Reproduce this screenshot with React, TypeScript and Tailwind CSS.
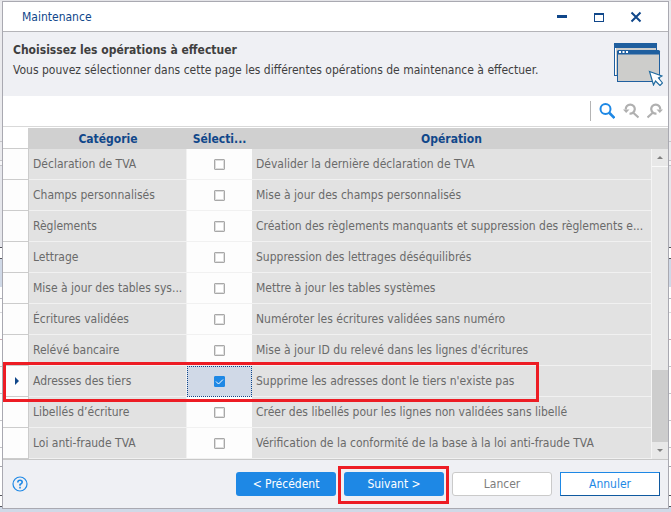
import { useState } from "react";
import clsx from "clsx";

type TOperation = {
  category: string;
  label: string;
};

const operations: TOperation[] = [
  { category: "Déclaration de TVA", label: "Dévalider la dernière déclaration de TVA" },
  { category: "Champs personnalisés", label: "Mise à jour des champs personnalisés" },
  {
    category: "Règlements",
    label: "Création des règlements manquants et suppression des règlements e...",
  },
  { category: "Lettrage", label: "Suppression des lettrages déséquilibrés" },
  { category: "Mise à jour des tables sys...", label: "Mettre à jour les tables systèmes" },
  { category: "Écritures validées", label: "Numéroter les écritures validées sans numéro" },
  { category: "Relévé bancaire", label: "Mise à jour ID du relevé dans les lignes d'écritures" },
  { category: "Adresses des tiers", label: "Supprime les adresses dont le tiers n'existe pas" },
  {
    category: "Libellés d’écriture",
    label: "Créer des libellés pour les lignes non validées sans libellé",
  },
  {
    category: "Loi anti-fraude TVA",
    label: "Vérification de la conformité de la base à la loi anti-fraude TVA",
  },
];

const CURRENT_ROW = 7;

// edge of the application window that shows on both sides of the dialog
const backdrop = [
  "h-[140px] bg-[#ebebee]",
  "h-px bg-[#c4c4c8]",
  "h-[18px] bg-[#ebebee]",
  "h-px bg-[#c4c4c8]",
  "h-[4px] bg-[#f6f6f8]",
  "h-px bg-[#c4c4c8]",
  "h-[81px] bg-[#e6e7ec]",
  "h-px bg-[#55555c]",
  "h-[10px] bg-white",
  "h-px bg-[#55555c]",
  "h-[28px] bg-[#d0d9e7]",
  "h-[11px] bg-white",
  "h-px bg-[#b4b4bc]",
  "h-[13px] bg-white",
  "h-px bg-[#d8d8dc]",
  "h-[26px] bg-white",
  "h-px bg-[#c8a8b0]",
  "h-[26px] bg-white",
  "h-px bg-[#c4c4c8]",
  "h-[26px] bg-white",
  "h-px bg-[#c4c4c8]",
  "h-[26px] bg-white",
  "h-px bg-[#c4c4c8]",
  "h-[26px] bg-white",
  "h-px bg-[#c4c4c8]",
  "h-[18px] bg-white",
  "h-px bg-[#a4a4ac]",
  "h-[28px] bg-white",
  "h-px bg-[#55555c]",
  "h-[10px] bg-white",
  "h-px bg-[#55555c]",
];

function Backdrop() {
  return (
    <div className="w-[2px] shrink-0" aria-hidden="true">
      {backdrop.map((segment, index) => (
        <div key={index} className={segment} />
      ))}
    </div>
  );
}

function TitleBar() {
  return (
    <div className="flex h-[30px] items-center border-b border-[#b4b4b8] bg-white pl-[19px] pr-6 text-[#10478a]">
      <h1 className="flex-1">Maintenance</h1>
      <div className="flex gap-[21px]">
        <button type="button" aria-label="Réduire" className="h-4 w-4">
          <svg viewBox="0 0 16 16" className="h-4 w-4" shapeRendering="crispEdges">
            <path d="M3 6h10v3H3z" fill="#10478a" />
          </svg>
        </button>
        <button type="button" aria-label="Agrandir" className="h-4 w-4">
          <svg viewBox="0 0 16 16" className="h-4 w-4" shapeRendering="crispEdges">
            <path d="M3 4h10v9H3zM4 6v6h8V6z" fill="#10478a" fillRule="evenodd" />
          </svg>
        </button>
        <button type="button" aria-label="Fermer" className="h-4 w-4">
          <svg viewBox="0 0 16 16" className="h-4 w-4">
            <path d="M3.500 3.500l9 9M12.500 3.500l-9 9" stroke="#10478a" strokeWidth="2" />
          </svg>
        </button>
      </div>
    </div>
  );
}

function WindowsIcon() {
  return (
    <svg viewBox="0 0 50 44" className="h-[44px] w-[50px]">
      <rect x="1.5" y="1.5" width="42" height="32" fill="#cdcdcb" stroke="#1f5f9f" />
      <path d="M2 6h1v27H2z" fill="#fff" />
      <path d="M1 6V2.500Q1 1 2.500 1H42.500Q44 1 44 2.500V6z" fill="#1f5f9f" />
      <rect x="4.500" y="9.500" width="42" height="30" fill="#cdcdcb" stroke="#1f5f9f" />
      <path d="M4 12V9.500Q4 8 5.500 8H45.500Q47 8 47 9.500V12.500H4z" fill="#1f5f9f" />
      <path d="M6 9h2v2H6zM9.500 9h2v2h-2zM13 9h2v2h-2z" fill="#fff" />
      <path
        d="M36.500 29.500l12.500 4.500-3.500 2 4 5-2.500 2.500-4.500-4.500-2 4z"
        fill="#fff"
        stroke="#1f6a9f"
        strokeWidth="1.200"
      />
    </svg>
  );
}

function Toolbar() {
  return (
    <div className="flex h-[30px] items-center justify-end gap-2 bg-white pr-[5px]">
      <span className="h-5 w-px bg-[#b4b4b4]" />
      <button type="button" aria-label="Rechercher" className="h-4 w-4">
        <svg viewBox="0 0 16 16" className="h-4 w-4" fill="none" stroke="#1e88e5">
          <circle cx="6.500" cy="6" r="5" strokeWidth="2" />
          <path d="M10 9.500l5.500 5.500" strokeWidth="2.600" />
        </svg>
      </button>
      <button type="button" aria-label="Rechercher le précédent" className="h-4 w-4">
        <svg viewBox="0 0 16 16" className="h-4 w-4" fill="none" stroke="#b0b0b0" strokeWidth="2.200">
          <path d="M2.800 6.500A4.500 4.500 0 1 1 6.500 10.500M10 9.500l5.500 5" />
          <path d="M0 6.500h6.500L3.200 10z" fill="#b0b0b0" stroke="none" />
        </svg>
      </button>
      <button type="button" aria-label="Rechercher le suivant" className="h-4 w-4">
        <svg viewBox="0 0 16 16" className="h-4 w-4" fill="none" stroke="#b0b0b0" strokeWidth="2.200">
          <path d="M13.200 6.500A4.500 4.500 0 1 0 9.500 10.500M6 9.500L0.500 14.500" />
          <path d="M16 6.500H9.500l3.300 3.500z" fill="#b0b0b0" stroke="none" />
        </svg>
      </button>
    </div>
  );
}

function ScrollBar() {
  return (
    <div className="flex w-[17px] shrink-0 flex-col bg-[#e8e8e8]">
      <div className="h-[21px] bg-[#d0d0d0]" />
      <div className="flex flex-1 flex-col border-l border-[#f4f4f4]">
        <div className="flex h-[18px] items-center justify-center border-b border-[#f9f9f9]">
          <svg viewBox="0 0 6 3" className="h-[3px] w-[6px]">
            <path d="M0 3L3 0l3 3z" fill="#808080" />
          </svg>
        </div>
        <div className="flex-1" />
        <div className="h-[72px] bg-[#cdcdcd]" />
        <div className="flex h-[17px] items-center justify-center">
          <svg viewBox="0 0 6 3" className="h-[3px] w-[6px]">
            <path d="M0 0L3 3l3-3z" fill="#808080" />
          </svg>
        </div>
      </div>
    </div>
  );
}

export default function App() {
  const [selected, setSelected] = useState<number[]>([CURRENT_ROW]);

  const toggle = (index: number) =>
    setSelected((prev) =>
      prev.includes(index) ? prev.filter((i) => i !== index) : [...prev, index]
    );

  return (
    <div className="flex min-h-screen items-start border-t border-[#e4e4e8] bg-[#d0d9e7] font-['DejaVu_Sans_Condensed','Noto_Sans',sans-serif] text-[12px] leading-4">
      <Backdrop />
      <main className="min-w-0 flex-1 border border-[#a9a9b1] bg-[#eff0f4]">
        <TitleBar />

        <header className="flex h-[64px] items-start justify-between pl-[10px] pr-[5px] pt-[10px] text-[#3f3f3f]">
          <div className="flex flex-col gap-1">
            <h2 className="font-bold">Choisissez les opérations à effectuer</h2>
            <p>
              Vous pouvez sélectionner dans cette page les différentes opérations de
              maintenance à effectuer.
            </p>
          </div>
          <WindowsIcon />
        </header>

        <Toolbar />

        <div className="relative flex border-b border-t border-b-[#c8c8c8] border-t-[#d9d9d9] bg-white pt-px">
          <table className="w-full min-w-0 table-fixed border-separate border-spacing-0 text-[#6a6a6a]">
            <colgroup>
              <col className="w-[26px]" />
              <col className="w-[158px]" />
              <col className="w-[65px]" />
              <col />
            </colgroup>
            <thead>
              <tr className="h-[21px] bg-[#d0d0d0] text-[#10478a]">
                <th
                  className="border-b border-r border-b-[#cccccc] border-r-[#d0d0d0] bg-white p-0"
                  aria-label="Ligne"
                />
                <th className="p-0">Catégorie</th>
                <th className="p-0">Sélecti...</th>
                <th className="p-0">Opération</th>
              </tr>
            </thead>
            <tbody>
              {operations.map((operation, index) => {
                const current = index === CURRENT_ROW;
                return (
                  <tr key={operation.category} className="h-[31px]">
                    <td className="border-b border-r border-[#cccccc] bg-[#fdfdfd] p-0">
                      {current && (
                        <svg viewBox="0 0 4 8" className="ml-3 h-2 w-1">
                          <path d="M0 0l4 4-4 4z" fill="#10478a" />
                        </svg>
                      )}
                    </td>
                    <td className="whitespace-nowrap border-b border-r border-[#f1f1f1] bg-[#e2e2e2] py-0 pl-1 pr-0">
                      {operation.category}
                    </td>
                    <td
                      className={clsx(
                        "border-b border-[#f1f1f1] p-0 text-center",
                        current
                          ? "bg-[#d0d9e7] outline-1 -outline-offset-1 outline-dotted outline-[#10478a]"
                          : "bg-[#fdfdfd]"
                      )}
                    >
                      <span className="relative inline-flex align-middle">
                        <input
                          type="checkbox"
                          aria-label={operation.label}
                          checked={selected.includes(index)}
                          onChange={() => toggle(index)}
                          className="peer h-[11px] w-[11px] appearance-none rounded-[1px] border border-[#a8a8a8] bg-white inset-ring inset-ring-[#dedede] checked:border-[#1e88e5] checked:bg-[#1e88e5] checked:inset-ring-[#1e88e5]"
                        />
                        <svg
                          viewBox="0 0 11 11"
                          className="pointer-events-none absolute inset-0 hidden peer-checked:block"
                        >
                          <path d="M2 5.500l2.500 2.500L9 3.500" fill="none" stroke="#fff" />
                        </svg>
                      </span>
                    </td>
                    <td className="whitespace-nowrap border-b border-[#f1f1f1] bg-[#e2e2e2] py-0 pl-1 pr-0">
                      {operation.label}
                    </td>
                  </tr>
                );
              })}
            </tbody>
          </table>
          <ScrollBar />
          <div className="pointer-events-none absolute bottom-[57px] left-0 right-[129px] h-[40px] border-[3px] border-[#ed1c24]" />
        </div>

        <footer className="flex items-center gap-2 py-3 pl-[9px] pr-2">
          <button type="button" aria-label="Aide" className="mr-auto h-4 w-4">
            <svg viewBox="0 0 16 16" className="h-4 w-4" fill="none" stroke="#1e88e5">
              <circle cx="8" cy="8" r="7" strokeWidth="1.200" />
              <path d="M5.800 6.500Q5.800 4.300 8 4.300T10.200 6.200Q10.200 7.200 8 8.500V9.800" strokeWidth="1.600" />
              <path d="M8 10.800v1.600" strokeWidth="1.600" />
            </svg>
          </button>
          <button type="button" className="h-6 w-[100px] rounded-[3px] bg-[#1e88e5] text-white">
            &lt; Précédent
          </button>
          <div className="relative flex">
            <button type="button" className="h-6 w-[100px] rounded-[3px] bg-[#1e88e5] text-white">
              Suivant &gt;
            </button>
            <div className="pointer-events-none absolute -bottom-2 -left-[6px] -right-[5px] -top-[6px] border-[3px] border-[#ed1c24]" />
          </div>
          <button
            type="button"
            className="h-6 w-[100px] rounded-[3px] border border-[#cacaca] bg-white text-[#7d7d7d]"
          >
            Lancer
          </button>
          <button
            type="button"
            className="h-6 w-[100px] border border-b-[#10599f] border-l-[#1e88e5] border-r-[#10599f] border-t-[#1e88e5] bg-white text-[#1e88e5]"
          >
            Annuler
          </button>
        </footer>
      </main>
      <Backdrop />
    </div>
  );
}
